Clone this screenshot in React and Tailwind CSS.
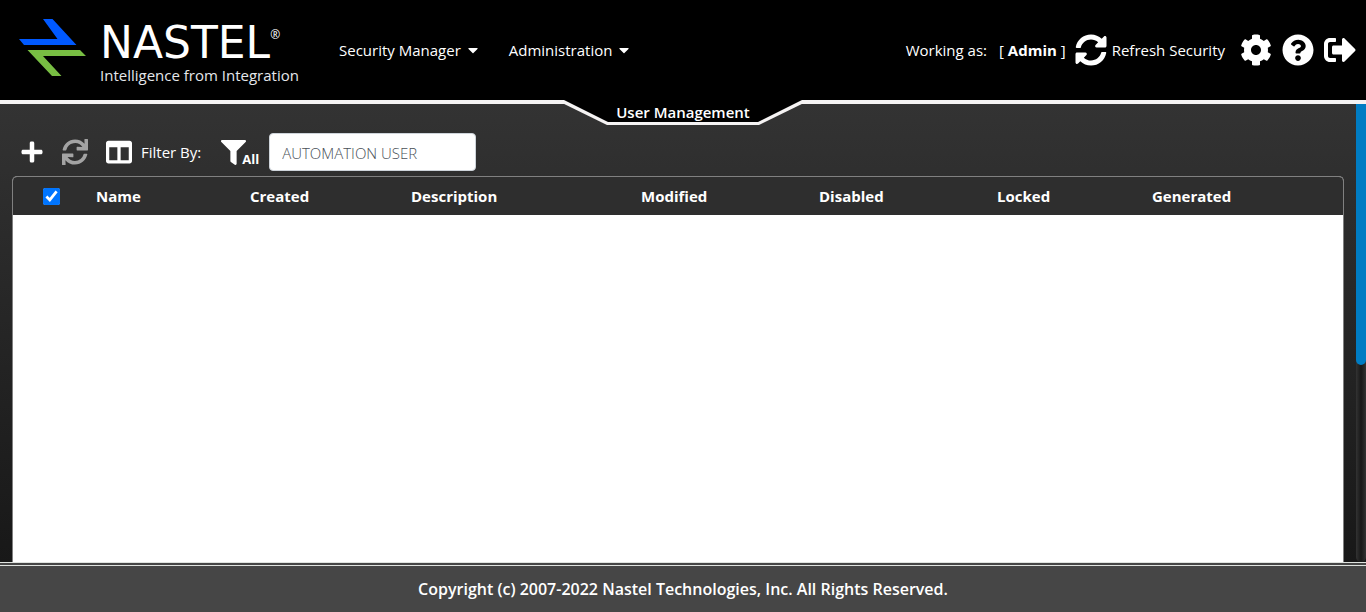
import { FaCaretDown, FaSyncAlt, FaSync, FaCog, FaQuestionCircle, FaSignOutAlt, FaPlus, FaColumns, FaFilter } from "react-icons/fa";

function Logo() {
  return (
    <a href="#home" className="flex w-[304px] shrink-0 gap-[14px] pt-[19px] pl-[19px] text-white">
      <svg width="67" height="58" viewBox="0 0 67 58" aria-hidden="true">
        <path d="M24 0H33.500L57.500 26H5L0 20H38.500Z" fill="#0059ff" />
        <path d="M8.500 31H61L67 37H24L42.500 57H33Z" fill="#78be43" />
      </svg>
      <span className="flex flex-col">
        <span className="flex h-[44px] items-start">
          <span className="font-['DejaVu_Sans',sans-serif] text-[44px] leading-[48px]">NASTEL</span>
          <span className="pt-[6px] text-[12px] leading-[20px]">®</span>
        </span>
        <span className="text-[15px] leading-6 text-gray-200">Intelligence from Integration</span>
      </span>
    </a>
  );
}

function MenuButton({ children }) {
  return (
    <button type="button" className="flex items-center gap-1 whitespace-nowrap">
      {children}
      <FaCaretDown size={16} />
    </button>
  );
}

const columns = ["Name", "Created", "Description", "Modified", "Disabled", "Locked", "Generated"];

export default function App() {
  return (
    <div className="flex h-screen flex-col overflow-hidden bg-[#303030] font-['Open_Sans','Noto_Sans',sans-serif] text-[15px] leading-6 text-white">
      <header className="relative flex h-[104px] shrink-0 border-b-4 border-[#f5f3f3] bg-black">
        <Logo />
        <nav aria-label="Main" className="flex items-center gap-7 pl-[35px]">
          <MenuButton>Security Manager</MenuButton>
          <MenuButton>Administration</MenuButton>
        </nav>
        <div className="ml-auto flex items-center pr-[10px]">
          <span className="mr-3">Working as:</span>
          <span className="mr-[9px]">[ <b>Admin</b> ]</span>
          <button type="button" className="mr-[15px] flex items-center gap-[5px]">
            <FaSyncAlt size={32} />
            Refresh Security
          </button>
          <div className="flex items-center gap-[10px]">
            <button type="button" aria-label="Settings"><FaCog size={32} /></button>
            <button type="button" aria-label="Help"><FaQuestionCircle size={32} /></button>
            <button type="button" aria-label="Sign out"><FaSignOutAlt size={32} /></button>
          </div>
        </div>
        <div className="absolute top-[100px] left-1/2 h-[25px] w-[254px] -translate-x-1/2">
          <svg className="absolute inset-0" width="254" height="25" viewBox="0 0 254 25" aria-hidden="true">
            <path d="M0 0H254L203 25H51Z" fill="#f5f3f3" />
            <path d="M8 0H246L202 22H52Z" fill="#000" />
          </svg>
          <h1 className="relative text-center font-semibold">User Management</h1>
        </div>
      </header>

      <main className="flex min-h-0 flex-1 bg-linear-to-b from-[#333] to-[#181818]">
        <div className="flex min-w-0 flex-1 flex-col px-3">
          <div className="flex h-[72px] shrink-0 items-end pb-[5px]">
            <div className="flex h-[38px] items-center pl-2">
              <button type="button" aria-label="Add user" className="mr-[18px]"><FaPlus size={24} /></button>
              <button type="button" aria-label="Refresh" className="mr-[18px] text-[#a3a3a3]"><FaSync size={26} /></button>
              <button type="button" aria-label="Columns" className="mr-[9px]"><FaColumns size={26} /></button>
              <label htmlFor="filter" className="mr-5">Filter By:</label>
              <button type="button" className="mr-[10px] flex items-center">
                <FaFilter size={25} />
                <span className="-ml-1 pt-[14px] text-[13px] leading-4 font-bold">All</span>
              </button>
              <input
                id="filter"
                type="text"
                defaultValue="AUTOMATION USER"
                className="h-[38px] w-[207px] rounded border border-[#ced4da] bg-white px-3 pt-px font-light text-[#495057]"
              />
            </div>
          </div>
          <div className="min-h-0 flex-1 overflow-hidden rounded-t-[5px] border border-b-0 border-[#808080] bg-white">
            <table className="w-full table-fixed text-left">
              <colgroup>
                <col className="w-[83px]" />
                <col className="w-[154px]" />
                <col className="w-[161px]" />
                <col className="w-[230px]" />
                <col className="w-[178px]" />
                <col className="w-[178px]" />
                <col className="w-[155px]" />
                <col />
              </colgroup>
              <thead className="bg-[#2e2e2e]">
                <tr className="h-[38px]">
                  <th className="pl-[30px]">
                    <input type="checkbox" defaultChecked aria-label="Select all users" className="block size-[17px] accent-[#0075ff]" />
                  </th>
                  {columns.map((name) => (
                    <th key={name} scope="col" className="font-bold">{name}</th>
                  ))}
                </tr>
              </thead>
              <tbody />
            </table>
          </div>
        </div>
        <div className="w-[10px] rounded-b-full bg-linear-to-r from-[#333] via-[#181818] to-[#333]">
          <div className="h-[57%] rounded-b-full bg-[#007cc3]" />
        </div>
      </main>

      <footer className="flex h-[50px] shrink-0 items-center justify-center border-t-4 border-double border-[#dfe3df] bg-[#464646] text-base font-semibold">
        Copyright (c) 2007-2022 Nastel Technologies, Inc. All Rights Reserved.
      </footer>
    </div>
  );
}
